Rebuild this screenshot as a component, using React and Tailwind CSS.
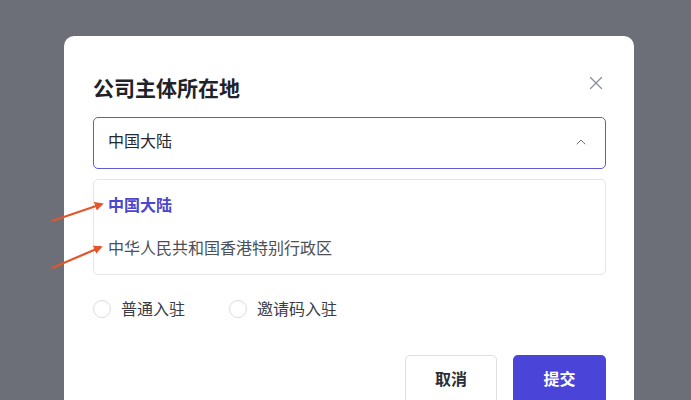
import { X, ChevronUp } from 'lucide-react';

const font = { fontFamily: '"Noto Sans CJK SC", "Noto Sans", sans-serif' };

function Radio({ label }) {
  return (
    <label className="flex items-center gap-[10px]">
      <span className="w-[18px] h-[18px] rounded-full border border-[#d9dbe0] bg-white" />
      <span className="text-[16px] text-[#3a3d45] leading-[20px] pb-[2px]">{label}</span>
    </label>
  );
}

export default function App() {
  return (
    <div className="relative w-[691px] h-[400px] overflow-hidden bg-[#6c6f77]" style={font}>
      <div className="ml-[64px] mt-[36px] w-[570px] h-[400px] rounded-[10px] bg-white pl-[29px] pr-[28px] pt-[34px]">
        {/* Header */}
        <div className="flex items-center justify-between h-[32px]">
          <h2 className="text-[21px] font-semibold text-[#1f2329] leading-[32px] pt-[1px]">公司主体所在地</h2>
          <button className="text-[#8a8e99] -mr-[1px] -mt-[7px]">
            <X size={22} strokeWidth={1.4} />
          </button>
        </div>

        {/* Select */}
        <div className="mt-[15px] h-[52px] flex items-center justify-between rounded-[5px] border-[1.5px] border-[#5e59d6] pl-[14px] pr-[16px]">
          <span className="text-[16px] text-[#25282e] leading-[20px] pb-[6px]">中国大陆</span>
          <ChevronUp size={16} strokeWidth={1.5} className="text-[#6b6f78] -mt-[2px]" />
        </div>

        {/* Dropdown */}
        <div className="mt-[10px] h-[96px] rounded-[5px] border border-[#e4e5e9] pt-[5px] px-[14px]">
          <div className="h-[38px] flex items-center text-[16px] font-semibold text-[#4d47cc]">中国大陆</div>
          <div className="h-[48px] flex items-center text-[16px] text-[#4b4f58]">中华人民共和国香港特别行政区</div>
        </div>

        {/* Radios */}
        <div className="mt-[22px] h-[24px] flex items-center gap-[44px]">
          <Radio label="普通入驻" />
          <Radio label="邀请码入驻" />
        </div>

        {/* Footer */}
        <div className="mt-[34px] flex justify-end gap-[16px]">
          <button className="w-[92px] h-[50px] rounded-[5px] border border-[#dcdee3] bg-white text-[16px] font-semibold text-[#2b2e35] pb-[4px]">取消</button>
          <button className="w-[93px] h-[50px] rounded-[5px] bg-[#4a44d8] text-[16px] font-semibold text-white pb-[4px]">提交</button>
        </div>
      </div>

      {/* Annotation arrows */}
      <svg className="absolute left-0 top-0 pointer-events-none" width="691" height="400">
        <defs>
          <marker id="ah" viewBox="0 0 10 10" refX="8" refY="5" markerWidth="4" markerHeight="4" orient="auto">
            <path d="M0 0 L10 5 L0 10 z" fill="#e5552b" />
          </marker>
        </defs>
        <line x1="52" y1="221" x2="102" y2="204" stroke="#e5552b" strokeWidth="2.2" markerEnd="url(#ah)" />
        <line x1="52" y1="268" x2="101" y2="247" stroke="#e5552b" strokeWidth="2.2" markerEnd="url(#ah)" />
      </svg>
    </div>
  );
}
